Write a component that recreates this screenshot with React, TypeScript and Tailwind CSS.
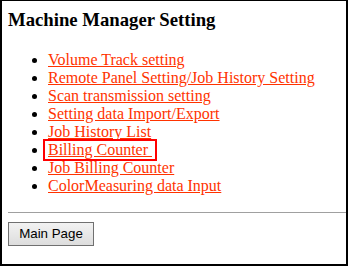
import React from 'react';

const links = [
  'Volume Track setting',
  'Remote Panel Setting/Job History Setting',
  'Scan transmission setting',
  'Setting data Import/Export',
  'Job History List',
  'Billing Counter',
  'Job Billing Counter',
  'ColorMeasuring data Input',
];

export default function App() {
  return (
    <div className="w-[349px] h-[266px] bg-white">
      <div className="w-[348px] h-[266px] border-l-2 border-r-2 border-b-2 border-t border-black pt-[8px] pl-[6px] font-['Liberation_Serif',serif]">
        <h3 className="text-[18.72px] font-bold leading-[21px] text-black mb-[21px]">Machine Manager Setting</h3>
        <ul className="list-disc pl-[40px] text-[16px] leading-[18px]">
          {links.map((t) => (
            <li key={t} className="relative">
              <a href="#" className="text-[#ff3300] underline">
                {t === 'Billing Counter' ? 'Billing Counter\u00a0' : t}
              </a>
              {t === 'Billing Counter' && (
                <span className="absolute left-[-5px] top-[-2px] w-[114px] h-[22px] border-2 border-[#ff0000]" />
              )}
            </li>
          ))}
        </ul>
        <hr className="mt-[17px] mr-0 border-0 border-t border-[#a0a0a0]" />
        <button className="mt-[9px] w-[86px] h-[24px] border border-[#707070] bg-gradient-to-b from-[#f2f2f2] to-[#dddddd] text-[13.33px] text-black font-['Liberation_Sans',Arial,sans-serif]">
          Main Page
        </button>
      </div>
    </div>
  );
}
